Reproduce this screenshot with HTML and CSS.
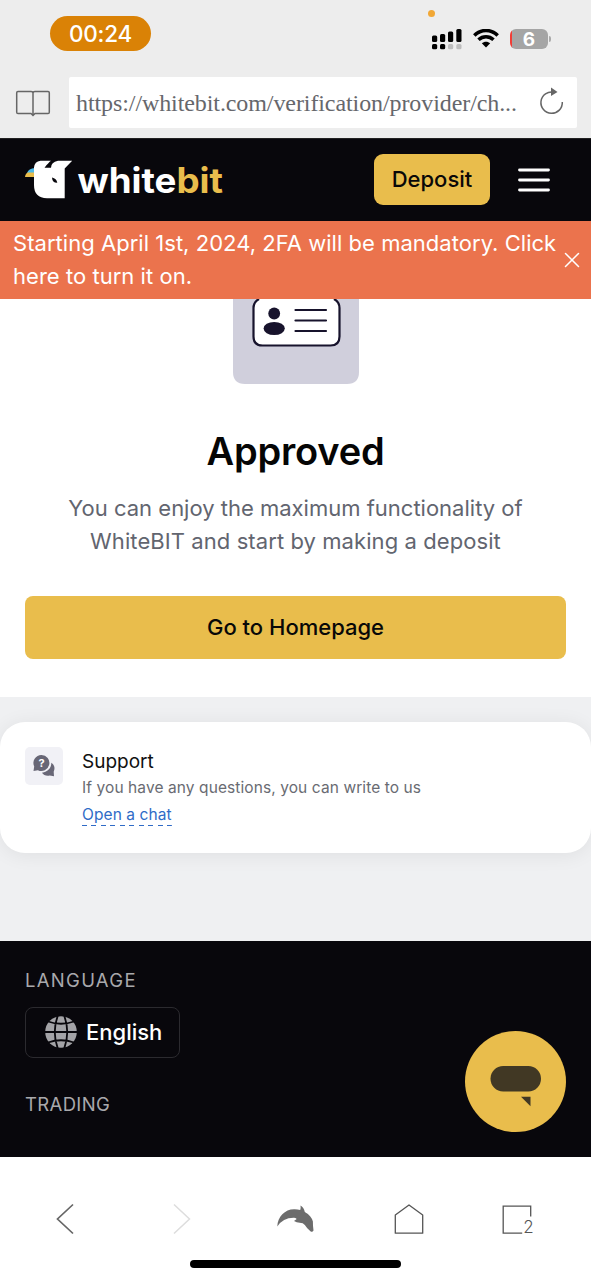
FILE: index.html
```html
<!DOCTYPE html>
<html lang="en">
<head>
<meta charset="utf-8">
<title>WhiteBIT verification</title>
<link rel="stylesheet" href="styles.css">
</head>
<body>
<div class="screen">
  <div class="chrome">
    <div class="status">
      <span class="clock">00:24</span>
      <span class="mic-dot"></span>
      <svg class="signal" width="30" height="21" viewBox="0 0 30 21">
        <g fill="#000"><rect x="0" y="6.500" width="5.200" height="6.500" rx="1.500"/><rect x="8" y="5" width="5.200" height="8" rx="1.500"/><rect x="16" y="2.500" width="5.200" height="10.500" rx="1.500"/><rect x="24.300" y="0" width="5.200" height="13" rx="1.500"/><rect x="0" y="15" width="5.200" height="5.300" rx="1.500"/><rect x="8" y="15" width="5.200" height="5.300" rx="1.500"/></g>
        <g fill="#bdbdbd"><rect x="16" y="15" width="5.200" height="5.300" rx="1.500"/><rect x="24.300" y="15" width="5.200" height="5.300" rx="1.500"/></g>
      </svg>
      <svg class="wifi" width="26" height="19" viewBox="0 0 26 19">
        <path d="M1.300 6.500C8-.2 18-.2 24.700 6.500M5.500 10.800c4.300-4 10.700-4 15 0" fill="none" stroke="#000" stroke-width="3.500"/>
        <path d="M13 18.500l-4.200-4.200c2.300-2.200 6.100-2.200 8.400 0z"/>
      </svg>
      <span class="battery"><span class="level">6</span><i class="cap"></i></span>
    </div>
    <div class="address-row">
      <svg class="book" width="36" height="27" viewBox="0 0 36 27" fill="none" stroke="#666" stroke-width="1.500"><path d="M18 2v23M3 1.500h13q2 0 2 1.500 0-1.500 2-1.500h13q1.300 0 1.300 1.300v19.400q0 1.300-1.300 1.300H20l-2 2-2-2H3q-1.300 0-1.300-1.300V2.800Q1.700 1.500 3 1.500z"/></svg>
      <div class="address"><span class="url">https://whitebit.com/verification/provider/ch...</span>
        <svg class="reload" width="26" height="28" viewBox="0 0 26 28"><path d="M15 5.200A10.700 10.700 0 1 0 23.300 15" fill="none" stroke="#666" stroke-width="1.500"/><path d="M12 .5l6.500 4.500-6.500 4z" fill="#666"/></svg>
      </div>
    </div>
  </div>
  <header class="header">
    <svg class="logo" width="200" height="42" viewBox="0 0 200 42">
      <path d="M2 14Q3.500 9.500 10 9V14z" fill="#4bb9e9"/><path d="M0 18Q.5 14 3 13.500h8V18z" fill="#e9bd4c"/>
      <path d="M15.500 1.700H26Q23.500 3.500 19.500 8.700H26Q26 3 33 1.700H47.200L39.700 9.500V39.300H22Q9 39 9 26V8.500Q9.500 2.500 15.500 1.700z" fill="#fff"/>
      <path d="M27 18.500q4.500 1 5.300 5.300-5 .2-5.300-5.300z" fill="#08070c"/>
      <text class="wordmark" x="52.500" y="33.500" textLength="145.500" lengthAdjust="spacingAndGlyphs"><tspan fill="#fff">white</tspan><tspan fill="#e9bd4c">bit</tspan></text>
    </svg>
    <button class="deposit">Deposit</button>
    <svg class="menu" width="32" height="24" viewBox="0 0 32 24" stroke="#fff" stroke-width="2.800" stroke-linecap="round"><path d="M1.500 2h29M1.500 12h29M1.500 22h29"/></svg>
  </header>
  <div class="banner">
    <p class="banner-text">Starting April 1st, 2024, 2FA will be mandatory. Click<br>here to turn it on.</p>
    <svg class="close" width="16" height="16" viewBox="0 0 16 16" stroke="#fff" stroke-width="1.500" stroke-linecap="round"><path d="M1.500 1.500l13 13M14.500 1.500l-13 13"/></svg>
  </div>
  <main class="result">
    <svg class="id-tile" width="126" height="85" viewBox="0 0 126 85">
      <path d="M0 0h126v73q0 12-12 12H12Q0 85 0 73z" fill="#d0cfdc"/>
      <path d="M27 0h73q6.500 2 6.500 9v28.500q0 9-9 9h-68q-9 0-9-9V9Q20.500 2 27 0z" fill="#fff"/>
      <path d="M26 0q-5.500 3-5.500 9v28.500q0 9 9 9h68q9 0 9-9V9q0-6-5.500-9" fill="none" stroke="#17132c" stroke-width="2.200"/>
      <circle cx="41.200" cy="14.500" r="5.900" fill="#17132c"/><ellipse cx="41.200" cy="29.500" rx="10.600" ry="6.600" fill="#17132c"/>
      <path d="M62.500 11h30.500M62.500 21.500h30.500M62.500 32h30.500" stroke="#17132c" stroke-width="2.200" stroke-linecap="round"/>
    </svg>
    <h1 class="title">Approved</h1>
    <p class="desc"><span class="line-one">You can enjoy the maximum functionality of</span><br><span class="line-two">WhiteBIT and start by making a deposit</span></p>
    <button class="home-button">Go to Homepage</button>
  </main>
  <section class="support-area">
    <div class="support-card">
      <div class="support-icon">
        <svg width="22" height="22" viewBox="0 0 22 22"><path d="M9 17.800c5.800-.8 9.500-5 9.300-10 3.700 2.500 3.700 6 2.400 8.900l.3 4.500-4.300-.6c-3 .8-6.300-.3-7.700-2.800z" fill="#686776"/><path d="M8.500 0a8 8 0 1 1-3.600 15.200L.5 16l.7-4.500A8 8 0 0 1 8.500 0z" fill="#686776"/><text class="question" x="8.500" y="11.900" text-anchor="middle">?</text></svg>
      </div>
      <div class="support-copy">
        <h2 class="support-title">Support</h2>
        <p class="support-desc">If you have any questions, you can write to us</p>
        <a class="chat-link">Open a chat</a>
      </div>
    </div>
  </section>
  <footer class="footer">
    <h3 class="footer-heading language">LANGUAGE</h3>
    <button class="lang-button">
      <svg width="32" height="32" viewBox="0 0 32 32"><circle cx="16" cy="16" r="15.800" fill="#a3a3a7"/><g fill="none" stroke="#08070c" stroke-width="1.800"><path d="M0 16h32M3 5.500q13 4.500 26 0M3 26.500q13-4.500 26 0M13-1q-6.500 17 0 34M19-1q6.500 17 0 34"/></g></svg>
      <span class="lang-name">English</span>
    </button>
    <h3 class="footer-heading trading">TRADING</h3>
    <div class="chat-bubble">
      <svg width="52" height="42" viewBox="0 0 52 42" fill="#413824"><rect x=".5" width="50.500" height="25.500" rx="12.700"/><path d="M31 30.700h9.500v9.500z"/></svg>
    </div>
  </footer>
  <nav class="toolbar">
    <div class="tools">
      <svg class="back" width="20" height="32" viewBox="0 0 20 32" fill="none" stroke="#666" stroke-width="1.700"><path d="M18 1.500L2.500 16 18 30.500"/></svg>
      <svg class="forward" width="20" height="32" viewBox="0 0 20 32" fill="none" stroke="#ddd" stroke-width="1.500"><path d="M2 1.500L17.500 16 2 30.500"/></svg>
      <svg class="dolphin" width="38" height="28" viewBox="0 0 38 28"><path d="M.3 21.500C.5 12 8 4.300 17 4.300q3.500-.1 6.200.8.800-1.500.3-4.600c2.500 1.500 3.800 3.800 4.300 6.400 4.500 2.500 7.500 6 8.100 9.600l.1 4.200.5 4.900q-1 1.800-2.800 1l-3.400-3.300q-1.700-3.200-4.600-5l-6-1-2.700-1.300 2.700-2q-1.200-1.300-2.700-1.300Q6 12.500.3 21.500z" fill="#6c6c6c"/></svg>
      <svg class="home" width="32" height="32" viewBox="0 0 32 32" fill="none" stroke="#555" stroke-width="1.300" stroke-linejoin="round"><path d="M16 2L29.700 12v18.200H2.300V12z"/></svg>
      <svg class="tabs" width="40" height="42" viewBox="0 -5 40 42" fill="none" stroke="#555" stroke-width="1.300"><path d="M30.700 13.500V3.200H3.200v27h19"/><text class="tab-count" x="23.200" y="30.200">2</text></svg>
    </div>
    <div class="home-indicator"></div>
  </nav>
</div>
</body>
</html>
```
FILE: styles.css
```css
* { box-sizing: border-box; }
body { margin: 0; background: #fff; font-family: Inter, "Liberation Sans", sans-serif; }
h1, h2, h3, p { margin: 0; font-weight: 400; }
button { border: 0; padding: 0; font-family: inherit; white-space: nowrap; }
svg { display: block; flex: none; }
.screen { width: 591px; height: 1280px; overflow: hidden; white-space: nowrap; }
.chrome { height: 138px; background: #ededed; }
.status { position: relative; height: 77px; display: flex; align-items: flex-start; padding-left: 50px; }
.clock { width: 101px; height: 35px; margin-top: 16px; border-radius: 18px; background: #da8206; color: #fff; font-size: 22.500px; line-height: 36px; text-align: center; font-weight: 500; letter-spacing: -.2px; }
.mic-dot { position: absolute; left: 428px; top: 10px; width: 7px; height: 7px; border-radius: 50%; background: #f1a735; }
.signal { margin: 29px 0 0 281px; }
.wifi { margin: 29px 0 0 11px; }
.battery { display: flex; align-items: center; margin: 29px 0 0 11px; gap: 1px; }
.level { width: 38px; height: 20px; border-radius: 6px; background: linear-gradient(90deg, #f13d37 2px, #a5a5a5 2px); color: #fff; font-size: 19px; font-weight: 700; line-height: 21px; text-align: center; }
.cap { width: 2px; height: 6px; border-radius: 0 2px 2px 0; background: #aaa; }
.address-row { display: flex; align-items: center; padding-left: 15px; height: 51px; }
.book { margin: 2px 18px 0 0; }
.address { width: 508px; height: 51px; background: #fff; border-radius: 2px; display: flex; align-items: center; justify-content: space-between; padding: 0 12px 0 7px; }
.reload { margin-top: -4px; }
.url { font-family: "Liberation Serif", serif; font-size: 24px; color: #66676c; letter-spacing: -.09px; line-height: 51px; padding-top: 2px; }
.header { height: 83px; background: #08070c; display: flex; align-items: center; padding: 0 0 1px 25px; border-top: 1px solid #222; }
.wordmark { font-family: Inter, sans-serif; font-weight: 700; font-size: 35px; }
.deposit { width: 116px; height: 51px; margin-left: 149px; padding-bottom: 1px; border-radius: 9px; background: #e9bd4c; color: #0a0808; font-size: 22px; font-weight: 500; }
.menu { margin-left: 28px; }
.banner { height: 78px; background: #eb734d; color: #fff; display: flex; align-items: center; padding-left: 13px; }
.banner-text { width: 551px; font-size: 22px; line-height: 33px; letter-spacing: .035px; }
.result { height: 398px; background: #fff; display: flex; flex-direction: column; align-items: center; }
.title { font-size: 38px; font-weight: 600; line-height: 46px; margin-top: 44px; color: #050505; letter-spacing: -.2px; }
.desc { margin-top: 18px; font-size: 22px; line-height: 33px; text-align: center; color: #62656f; }
.line-two { letter-spacing: .08px; }
.home-button { width: 541px; height: 63px; margin-top: 38px; padding-bottom: 2px; border-radius: 8px; background: #e9bd4c; color: #080808; font-size: 22px; font-weight: 500; }
.support-area { height: 244px; background: #eff0f2; padding-top: 25px; }
.support-card { height: 131px; background: #fff; border-radius: 25px; display: flex; padding: 25px; gap: 19px; box-shadow: 0 2px 20px rgba(0,0,0,.07); }
.support-icon { width: 38px; height: 38px; border-radius: 5px; background: #f1f1f6; display: flex; align-items: center; justify-content: center; }
.question { font-family: Inter, sans-serif; font-size: 11px; font-weight: 700; fill: #fff; }
.support-title { font-size: 19px; line-height: 29px; color: #111; }
.support-desc { font-size: 15.500px; line-height: 24px; letter-spacing: .09px; color: #696b72; }
.chat-link { display: inline-block; height: 26px; font-size: 15.500px; line-height: 29px; letter-spacing: .09px; color: #2f6bc7; background: repeating-linear-gradient(90deg, #2f6bc7 0 5px, transparent 5px 9.500px) bottom / 100% 1.500px no-repeat; }
.footer { position: relative; height: 216px; background: #08070c; padding: 28px 25px 0; }
.footer-heading { font-size: 18.500px; line-height: 23px; color: #a9a9ac; }
.language { letter-spacing: 1.300px; }
.trading { letter-spacing: .35px; }
.lang-button { width: 155px; height: 51px; margin: 15px 0 35px; padding: 0 0 1px 19px; border: 1.500px solid #2b2a2f; border-radius: 8px; background: transparent; display: flex; align-items: center; gap: 9px; }
.lang-name { color: #fff; font-size: 22px; font-weight: 500; }
.chat-bubble { position: absolute; left: 465px; top: 90px; width: 101px; height: 101px; border-radius: 50%; background: #e9bd4c; display: flex; justify-content: center; padding-top: 35px; }
.toolbar { height: 123px; background: #fff; }
.tools { height: 103px; padding: 20px 0 0 55px; display: flex; align-items: center; }
.forward { margin-left: 97px; }
.dolphin { margin-left: 85px; }
.home { margin-left: 78px; }
.tabs { margin-left: 75px; }
.tab-count { font-family: Inter, sans-serif; font-size: 17px; font-weight: 300; fill: #555; stroke: none; }
.home-indicator { width: 211px; height: 8px; border-radius: 4px; background: #000; margin: 0 auto; }
```
